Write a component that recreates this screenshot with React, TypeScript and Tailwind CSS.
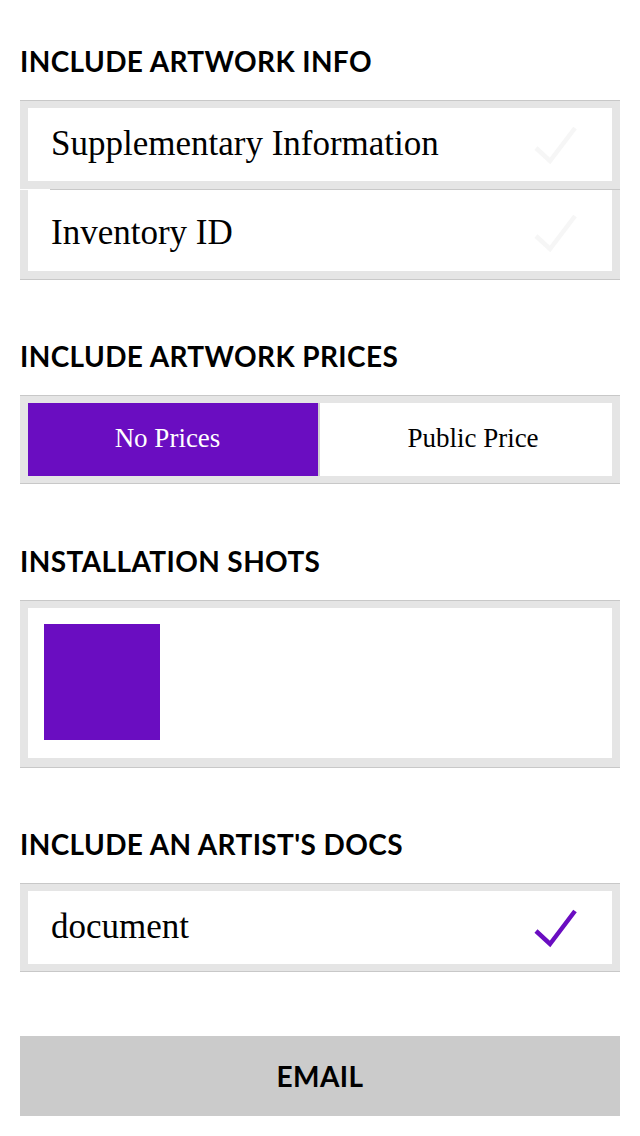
const PURPLE = "#6a0dc1";

const Check = ({ color }: { color: string }) => (
  <svg width="44" height="40" viewBox="0 0 44 40" className="shrink-0">
    <polyline points="2,23 16,36 41,3" fill="none" stroke={color} strokeWidth="4.5" />
  </svg>
);

const headFont = { fontFamily: "Lato, 'Noto Sans', sans-serif" };
const serif = { fontFamily: "'Liberation Serif', 'DejaVu Serif', serif" };

const Heading = ({ children, top }: { children: string; top: string }) => (
  <h2 className={`${top} mb-[25px] text-[28px] leading-none font-bold tracking-[0.4px] text-black uppercase`} style={headFont}>
    {children}
  </h2>
);

export default function App() {
  return (
    <div className="w-[640px] min-h-[1136px] bg-white px-5 pb-5">
      <Heading top="mt-[47px]">Include Artwork Info</Heading>
      <div className="border-t border-[#c8c8c8]">
        <div className="bg-[#e5e5e5] px-2 pt-[7px] pb-2">
          <div className="h-[73px] bg-white flex items-center justify-between pl-[23px] pr-[34px]">
            <span className="text-[35px] text-black" style={serif}>Supplementary Information</span>
            <Check color="#f6f6f6" />
          </div>
        </div>
        <div className="h-px ml-[30px] bg-[#c8c8c8]" />
        <div className="bg-[#e5e5e5] px-2 pb-2 border-b border-[#c8c8c8]">
          <div className="h-[81px] bg-white flex items-center justify-between pl-[23px] pr-[34px] pt-[5px]">
            <span className="text-[35px] text-black" style={serif}>Inventory ID</span>
            <Check color="#f6f6f6" />
          </div>
        </div>
      </div>

      <Heading top="mt-[62px]">Include Artwork Prices</Heading>
      <div className="border-y border-[#c8c8c8] bg-[#e5e5e5] px-2 py-[7px]">
        <div className="h-[73px] flex">
          <div className="w-[290px] bg-[#6a0dc1] flex items-center justify-center pr-[11px] pb-[3px]">
            <span className="text-[27px] text-white" style={serif}>No Prices</span>
          </div>
          <div className="w-[2px] bg-[#d0d0d0]" />
          <div className="flex-1 bg-white flex items-center justify-center pl-[14px] pb-[3px]">
            <span className="text-[27px] text-black" style={serif}>Public Price</span>
          </div>
        </div>
      </div>

      <Heading top="mt-[63px]">Installation Shots</Heading>
      <div className="border-y border-[#c8c8c8] bg-[#e5e5e5] px-2 pt-[7px] pb-[9px]">
        <div className="h-[150px] bg-white p-4">
          <div className="w-[116px] h-[116px]" style={{ backgroundColor: PURPLE }} />
        </div>
      </div>

      <Heading top="mt-[62px]">Include an Artist's Docs</Heading>
      <div className="border-y border-[#c8c8c8] bg-[#e5e5e5] px-2 py-[7px]">
        <div className="h-[73px] bg-white flex items-center justify-between pl-[23px] pr-[34px]">
          <span className="text-[35px] text-black" style={serif}>document</span>
          <Check color={PURPLE} />
        </div>
      </div>

      <button className="mt-16 w-full h-20 bg-[#cbcbcb] text-[28px] leading-none font-bold tracking-[0.4px] text-black" style={headFont}>
        EMAIL
      </button>
    </div>
  );
}
